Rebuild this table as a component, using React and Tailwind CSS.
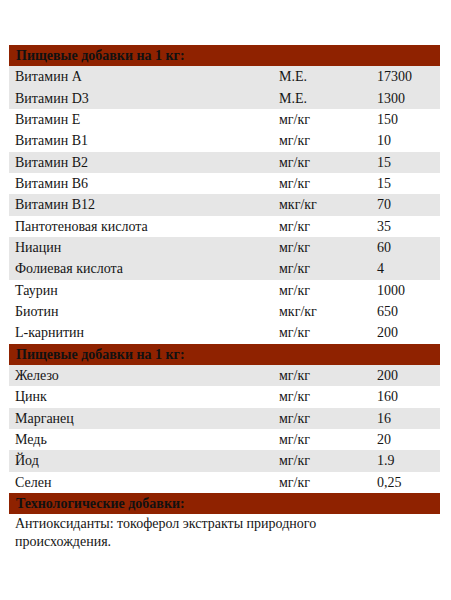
import React from "react";

const groups = [
  {
    title: "Пищевые добавки на 1 кг:",
    rows: [
      ["Витамин А", "М.Е.", "17300", true],
      ["Витамин D3", "М.Е.", "1300", true],
      ["Витамин Е", "мг/кг", "150", false],
      ["Витамин В1", "мг/кг", "10", false],
      ["Витамин В2", "мг/кг", "15", true],
      ["Витамин В6", "мг/кг", "15", false],
      ["Витамин В12", "мкг/кг", "70", true],
      ["Пантотеновая кислота", "мг/кг", "35", false],
      ["Ниацин", "мг/кг", "60", true],
      ["Фолиевая кислота", "мг/кг", "4", true],
      ["Таурин", "мг/кг", "1000", false],
      ["Биотин", "мкг/кг", "650", false],
      ["L-карнитин", "мг/кг", "200", false],
    ],
  },
  {
    title: "Пищевые добавки на 1 кг:",
    rows: [
      ["Железо", "мг/кг", "200", true],
      ["Цинк", "мг/кг", "160", false],
      ["Марганец", "мг/кг", "16", true],
      ["Медь", "мг/кг", "20", false],
      ["Йод", "мг/кг", "1.9", true],
      ["Селен", "мг/кг", "0,25", false],
    ],
  },
];

function Header({ children }) {
  return (
    <div className="h-[21.33px] bg-[#8f2200] pl-[7px] flex items-center font-bold text-[#111] text-[14px]">
      {children}
    </div>
  );
}

export default function App() {
  return (
    <div className="w-[451px] h-[600px] bg-white pt-[45px] text-[14px] text-[#151515] font-['Liberation_Serif','Times_New_Roman',serif]">
      <div className="ml-[9px] w-[431px]">
        {groups.map((g, gi) => (
          <div key={gi}>
            <Header>{g.title}</Header>
            {g.rows.map(([name, unit, val, gray], i) => (
              <div
                key={i}
                className={
                  "h-[21.33px] flex items-center " +
                  (gray ? "bg-[#e6e6e6]" : "bg-white")
                }
              >
                <div className="pl-[6px] w-[270px]">{name}</div>
                <div className="w-[98px]">{unit}</div>
                <div>{val}</div>
              </div>
            ))}
          </div>
        ))}
        <Header>Технологические добавки:</Header>
        <div className="pl-[6px] pt-[1px] w-[340px] leading-[18px]">
          Антиоксиданты: токоферол экстракты природного происхождения.
        </div>
      </div>
    </div>
  );
}
